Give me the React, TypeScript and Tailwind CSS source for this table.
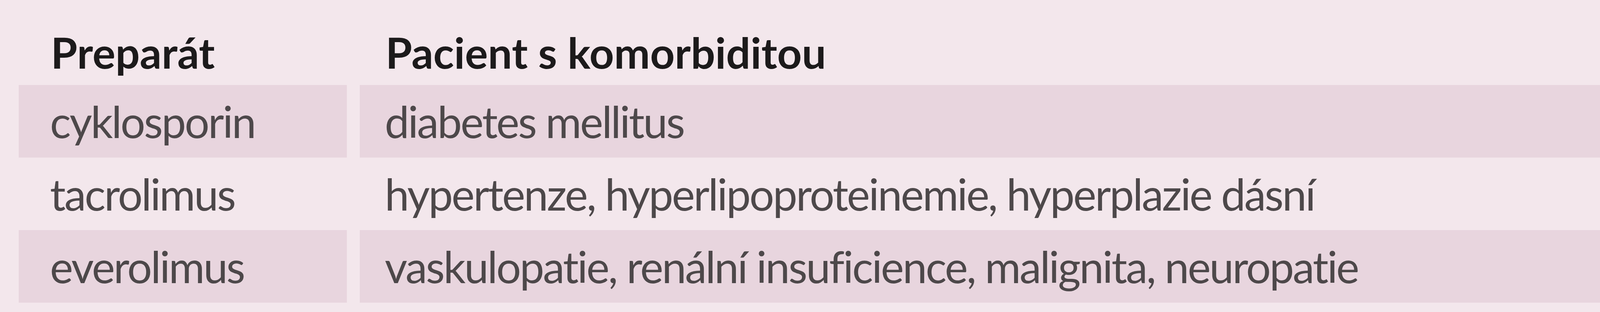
const rows = [
  { drug: 'cyklosporin', comorbidity: 'diabetes mellitus', striped: true },
  { drug: 'tacrolimus', comorbidity: 'hypertenze, hyperlipoproteinemie, hyperplazie dásní', striped: false },
  { drug: 'everolimus', comorbidity: 'vaskulopatie, renální insuficience, malignita, neuropatie', striped: true },
];

export default function App() {
  return (
    <div className="flex h-[800px] w-full bg-white">
      <div className="h-full w-[4202px] shrink-0 bg-[#f3e7ec] pl-[48px] font-['Lato',_'Noto_Sans',_sans-serif]">
        {/* header */}
        <div className="grid h-[218px] grid-cols-[840px_3225px] gap-x-[33px] text-[110px] font-bold leading-[1.2] text-[#1c1a1b]">
          <div className="pl-[82px] pt-[67px]">Preparát</div>
          <div className="pl-[66px] pt-[67px]">Pacient s komorbiditou</div>
        </div>

        {rows.map((row) => (
          <div
            key={row.drug}
            className="grid h-[186px] grid-cols-[840px_3225px] gap-x-[33px] text-[112px] font-normal leading-[1.2] tracking-[-3.5px] text-[#4d484a]"
          >
            <div className={row.striped ? 'bg-[#e8d5de] pl-[80px] pt-[26px]' : 'pl-[80px] pt-[26px]'}>
              {row.drug}
            </div>
            <div className={row.striped ? 'bg-[#e8d5de] pl-[64px] pt-[26px]' : 'pl-[64px] pt-[26px]'}>
              {row.comorbidity}
            </div>
          </div>
        ))}
      </div>
    </div>
  );
}
